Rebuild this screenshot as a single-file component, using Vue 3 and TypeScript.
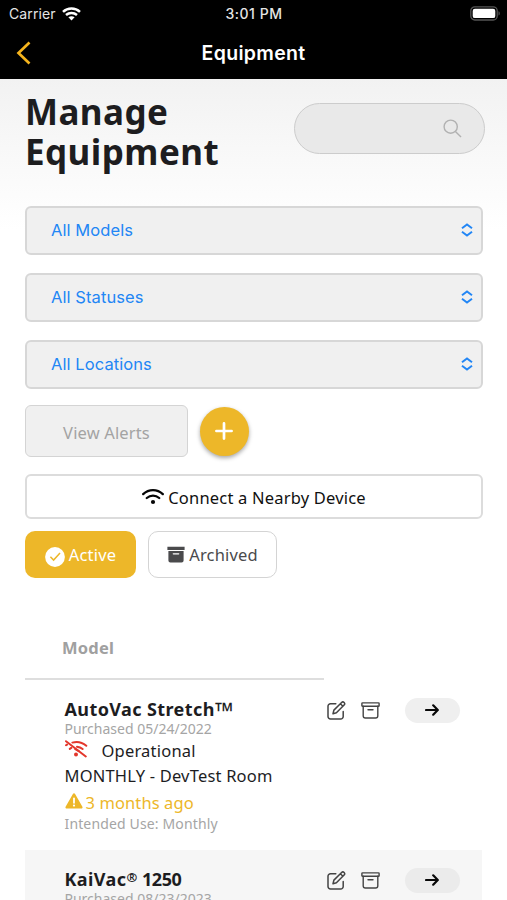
<script setup lang="ts">
interface Unit {
  name: string
  mark: string
  series: string
  purchased: string
  status: string
  place: string
  age: string
  use: string
}

const filters: string[] = ['All Models', 'All Statuses', 'All Locations']

const units: Unit[] = [
  { name: 'AutoVac Stretch', mark: '™', series: '', purchased: '05/24/2022', status: 'Operational', place: 'MONTHLY - DevTest Room', age: '3 months ago', use: 'Monthly' },
  { name: 'KaiVac', mark: '®', series: '1250', purchased: '08/23/2023', status: 'Operational', place: 'MONTHLY - DevTest Room', age: '3 months ago', use: 'Monthly' },
]
</script>

<template>
  <div class="screen">
    <header class="top">
      <div class="status">
        <div class="carrier">
          <span>Carrier</span>
          <svg width="19" height="14" viewBox="0 0 19 14" fill="none" stroke="#fff" stroke-width="2.5">
            <path d="M1 4.9C5.8.5 13.2.5 18 4.9M4 8c3.2-2.8 7.800-2.800 11 0" />
            <path d="M6.400 10.300c1.800-1.500 4.400-1.500 6.200 0L9.500 13.500z" fill="#fff" stroke="none" />
          </svg>
        </div>
        <span class="time">3:01 PM</span>
        <svg class="battery" width="31" height="15" viewBox="0 0 31 15">
          <rect x=".8" y=".8" width="26.400" height="13.200" rx="4" fill="none" stroke="#555" stroke-width="1.300" />
          <rect x="2.700" y="2.700" width="22.600" height="9.400" rx="2.200" fill="#fff" />
          <path d="M28.500 5.200c1.700.6 1.700 3.800 0 4.400z" fill="#555" />
        </svg>
      </div>
      <nav class="nav">
        <svg width="15" height="24" viewBox="0 0 15 24" fill="none" stroke="#f5b41d" stroke-width="2.700">
          <path d="M13.500 1.500 2.500 12l11 10.500" />
        </svg>
        <span class="nav-title">Equipment</span>
        <span></span>
      </nav>
    </header>

    <main class="content">
      <div class="heading">
        <h1>Manage<br />Equipment</h1>
        <div class="search">
          <svg width="19" height="19" viewBox="0 0 19 19" fill="none" stroke="#b1b1b1" stroke-width="1.400">
            <circle cx="7.700" cy="7.700" r="6.600" />
            <path d="m12.400 12.400 5.600 5.600" />
          </svg>
        </div>
      </div>

      <div class="filters">
        <div v-for="label in filters" :key="label" class="select">
          <span>{{ label }}</span>
          <svg width="12" height="14" viewBox="0 0 12 14" fill="none" stroke="#2286f5" stroke-width="2">
            <path d="M1 5.300 6 1.500l5 3.800M1 8.700l5 3.800 5-3.800" />
          </svg>
        </div>
      </div>

      <div class="actions">
        <button class="alerts">View Alerts</button>
        <button class="add">
          <svg width="18" height="18" viewBox="0 0 18 18" stroke="#fff" stroke-width="2.700" stroke-linecap="round">
            <path d="M9 1.400v15.200M1.400 9h15.200" />
          </svg>
        </button>
      </div>

      <button class="connect">
        <svg width="22" height="17" viewBox="0 0 22 17" fill="none" stroke="#050505" stroke-width="2.300" stroke-linecap="round">
          <path d="M1.200 6.100c5.600-5.300 14-5.300 19.600 0M4.800 10c3.600-3.300 8.800-3.300 12.400 0" />
          <circle cx="11" cy="14" r="2.100" fill="#050505" stroke="none" />
        </svg>
        <span>Connect a Nearby Device</span>
      </button>

      <div class="tabs">
        <button class="tab active">
          <svg class="check" width="20" height="20" viewBox="0 0 20 20">
            <circle cx="10" cy="10" r="9.900" fill="#fff" />
            <path d="m5.400 9.800 3.200 3.300 6.400-7" fill="none" stroke="#edb729" stroke-width="1.500" />
          </svg>
          <span>Active</span>
        </button>
        <button class="tab archived">
          <svg width="18" height="17" viewBox="0 0 18 17" fill="#4a4a4c">
            <path d="M.4.800h17.200v3.200H.4zM1.400 5h15.200v9.500a2 2 0 0 1-2 2H3.400a2 2 0 0 1-2-2z" />
            <path d="M6.300 7.800h5.400" stroke="#fff" stroke-width="1.300" stroke-linecap="round" />
          </svg>
          <span>Archived</span>
        </button>
      </div>

      <div class="table-head">Model</div>

      <section v-for="unit in units" :key="unit.name" class="row">
        <div class="info">
          <h2>{{ unit.name }}<span :class="unit.mark === '™' ? 'trade' : 'registered'">{{ unit.mark }}</span><span v-if="unit.series" class="series">&nbsp;{{ unit.series }}</span></h2>
          <div class="purchased">Purchased {{ unit.purchased }}</div>
          <div class="state">
            <svg width="23" height="18" viewBox="0 0 23 18" fill="none" stroke="#e3372c" stroke-width="2" stroke-linecap="round">
              <path d="M1 1.200 20.800 16.500" />
              <path d="M7.400 2.600c4.900-1.400 9.900-.2 13.900 3.200M12 6.800c2.200.2 4 .9 5.600 2.200M1 5.300l1-.7M4.800 8.900l1.500-1M10.300 9.200l3.400 2" />
              <circle cx="11" cy="14.500" r="2" fill="#e3372c" stroke="none" />
            </svg>
            <span>{{ unit.status }}</span>
          </div>
          <div class="place">{{ unit.place }}</div>
          <div class="age">
            <svg width="18" height="16" viewBox="0 0 18 16">
              <path d="M7.900 1c.5-.9 1.700-.9 2.200 0l7.300 12.700c.5.900-.1 1.900-1.100 1.900H1.700c-1 0-1.600-1-1.100-1.900z" fill="#edb729" />
              <path d="M9 5.300v4.500" stroke="#fff" stroke-width="1.800" stroke-linecap="round" />
              <circle cx="9" cy="12.600" r="1.100" fill="#fff" />
            </svg>
            <span>{{ unit.age }}</span>
          </div>
          <div class="use">Intended Use: {{ unit.use }}</div>
        </div>
        <div class="tools">
          <svg width="19" height="19" viewBox="0 0 19 19" fill="none" stroke="#444" stroke-width="1.500" stroke-linejoin="round" stroke-linecap="round">
            <path d="M8.800 2.700H3.500a2.500 2.500 0 0 0-2.500 2.500v10.200a2.500 2.500 0 0 0 2.500 2.500h10.200a2.500 2.500 0 0 0 2.500-2.500v-5" />
            <path d="m6 12.700.9-3.600 7.700-7.600a1.700 1.700 0 0 1 2.500 2.500l-7.700 7.700zM13.400 2.800l2.500 2.500" />
          </svg>
          <svg class="box" width="19" height="17" viewBox="0 0 19 17" fill="none" stroke="#444" stroke-width="1.400" stroke-linejoin="round" stroke-linecap="round">
            <rect x=".9" y=".9" width="17.200" height="3.400" rx=".6" />
            <path d="M2.200 4.300v9.500a2.200 2.200 0 0 0 2.200 2.200h10.200a2.200 2.200 0 0 0 2.200-2.200V4.300M7 7.800h5" />
          </svg>
          <button class="open">
            <svg width="14" height="12" viewBox="0 0 14 12" fill="none" stroke="#080808" stroke-width="2.200" stroke-linecap="round" stroke-linejoin="round">
              <path d="M1 6h11.500M8.200 1.300 12.800 6l-4.600 4.700" />
            </svg>
          </button>
        </div>
      </section>
    </main>
  </div>
</template>

<style>
body {
  margin: 0;
  overflow: hidden;
}
</style>

<style scoped>
.screen {
  width: 507px;
  height: 900px;
  overflow: hidden;
  background: #fff;
  color: #1d1d1f;
  font-family: "Noto Sans", sans-serif;
}
.screen * {
  box-sizing: border-box;
}
svg {
  display: block;
  flex: none;
}
button {
  font: inherit;
  padding: 0;
  border: 0;
  display: flex;
  align-items: center;
  justify-content: center;
}
.top {
  height: 79px;
  background: #000;
  color: #fff;
  font-family: Inter, sans-serif;
}
.status {
  height: 27px;
  padding: 0 6px 0 9px;
  display: grid;
  grid-template-columns: 1fr auto 1fr;
  align-items: center;
  font-size: 14px;
  color: #e5e5e5;
}
.carrier {
  display: flex;
  align-items: center;
  gap: 6px;
  letter-spacing: 0.1px;
}
.time {
  margin-right: 2px;
  font-weight: 500;
  font-size: 14px;
  letter-spacing: 0.55px;
}
.battery {
  justify-self: end;
}
.nav {
  height: 51px;
  padding: 0 16px;
  display: grid;
  grid-template-columns: 1fr auto 1fr;
  align-items: center;
}
.nav-title {
  font-size: 19.5px;
  font-weight: 600;
  letter-spacing: 0.3px;
}
.content {
  height: 821px;
  padding: 13px 24px 0 25px;
  background: linear-gradient(#f2f2f2 0, #fff 150px);
}
.heading {
  height: 114px;
  display: flex;
  justify-content: space-between;
  margin-right: -2px;
}
h1 {
  margin: 0;
  font-size: 35px;
  line-height: 40px;
  font-weight: 700;
  letter-spacing: 0.45px;
}
.search {
  width: 191px;
  height: 51px;
  margin-top: 11px;
  padding-right: 22px;
  border: 1px solid #ccc;
  border-radius: 26px;
  background: #e9e9e9;
  display: flex;
  align-items: center;
  justify-content: flex-end;
}
.filters {
  display: grid;
  gap: 18px;
}
.select {
  height: 49px;
  padding: 0 8px 1px 24px;
  border: 2px solid #d7d7d7;
  border-radius: 6px;
  background: #f0f0f0;
  color: #2286f5;
  display: flex;
  align-items: center;
  justify-content: space-between;
  font-family: Inter, sans-serif;
  font-size: 16.5px;
  letter-spacing: 0.08px;
}
.actions {
  margin-top: 16px;
  display: flex;
  align-items: center;
  gap: 12px;
}
.alerts {
  width: 163px;
  height: 52px;
  padding-top: 2px;
  border: 1.5px solid #d4d4d4;
  border-radius: 6px;
  background: #f0f0f0;
  color: #a3a3a3;
  font-size: 16.5px;
  letter-spacing: 0.15px;
}
.add {
  width: 49px;
  height: 49px;
  margin-top: 1px;
  padding: 0 2px 2px 0;
  border-radius: 50%;
  background: #edb729;
  box-shadow: 0 2px 4px rgba(0, 0, 0, 0.35);
}
.connect {
  width: 458px;
  height: 45px;
  margin-top: 17px;
  padding-top: 2px;
  gap: 4px;
  border: 2px solid #dcdcdc;
  border-radius: 6px;
  background: #fff;
  color: #101010;
  font-size: 16.5px;
  letter-spacing: 0.19px;
}
.connect svg {
  margin-top: -2px;
}
.tabs {
  margin-top: 12px;
  display: flex;
  gap: 12px;
}
.tab {
  height: 47px;
  gap: 4px;
  border-radius: 10px;
  font-size: 16.5px;
  letter-spacing: 0.15px;
}
.active {
  width: 111px;
  background: #edb729;
  color: #fff;
}
.check {
  margin-top: 4px;
}
.archived {
  width: 129px;
  border: 1.5px solid #d4d4d4;
  background: #fff;
  color: #4a4a4c;
}
.table-head {
  width: 299px;
  height: 102px;
  padding: 58px 0 0 37px;
  border-bottom: 2px solid #dedede;
  color: #a0a0a0;
  font-size: 16.5px;
  font-weight: 700;
  line-height: 24px;
  letter-spacing: 0.2px;
}
.row {
  height: 170px;
  margin-right: 1px;
  padding: 17px 22px 0 39.5px;
  display: flex;
  justify-content: space-between;
}
.row:nth-of-type(even) {
  background: #f6f6f6;
}
.info {
  white-space: nowrap;
}
h2 {
  margin: 0;
  height: 24px;
  font-size: 18px;
  line-height: 24px;
  font-weight: 700;
  letter-spacing: 0.4px;
}
.trade {
  font-size: 24px;
  line-height: 20px;
  vertical-align: -4px;
}
.registered {
  font-size: 13px;
  line-height: 10px;
  vertical-align: 4px;
}
.series {
  letter-spacing: -0.4px;
}
.purchased {
  line-height: 16px;
  font-size: 14px;
  color: #a5a5a5;
}
.state {
  height: 26px;
  display: flex;
  align-items: center;
  gap: 14px;
  font-size: 16.5px;
  letter-spacing: 0.2px;
}
.state svg {
  margin-top: -3px;
}
.place {
  font-size: 16.5px;
  line-height: 26px;
  letter-spacing: 0.2px;
}
.age {
  height: 26px;
  display: flex;
  align-items: center;
  gap: 3px;
  color: #edb729;
  font-size: 16.5px;
  letter-spacing: 0.1px;
}
.age svg {
  margin-top: -2px;
}
.use {
  font-size: 14px;
  line-height: 18px;
  letter-spacing: 0.14px;
  color: #a5a5a5;
}
.tools {
  height: 27px;
  display: flex;
  align-items: center;
}
.box {
  margin-left: 15px;
}
.open {
  width: 55px;
  height: 25px;
  margin-left: 25px;
  padding: 0 1px 1px 0;
  border-radius: 13px;
  background: #efefef;
}
.row:nth-of-type(even) .open {
  background: #ebebeb;
}
</style>
